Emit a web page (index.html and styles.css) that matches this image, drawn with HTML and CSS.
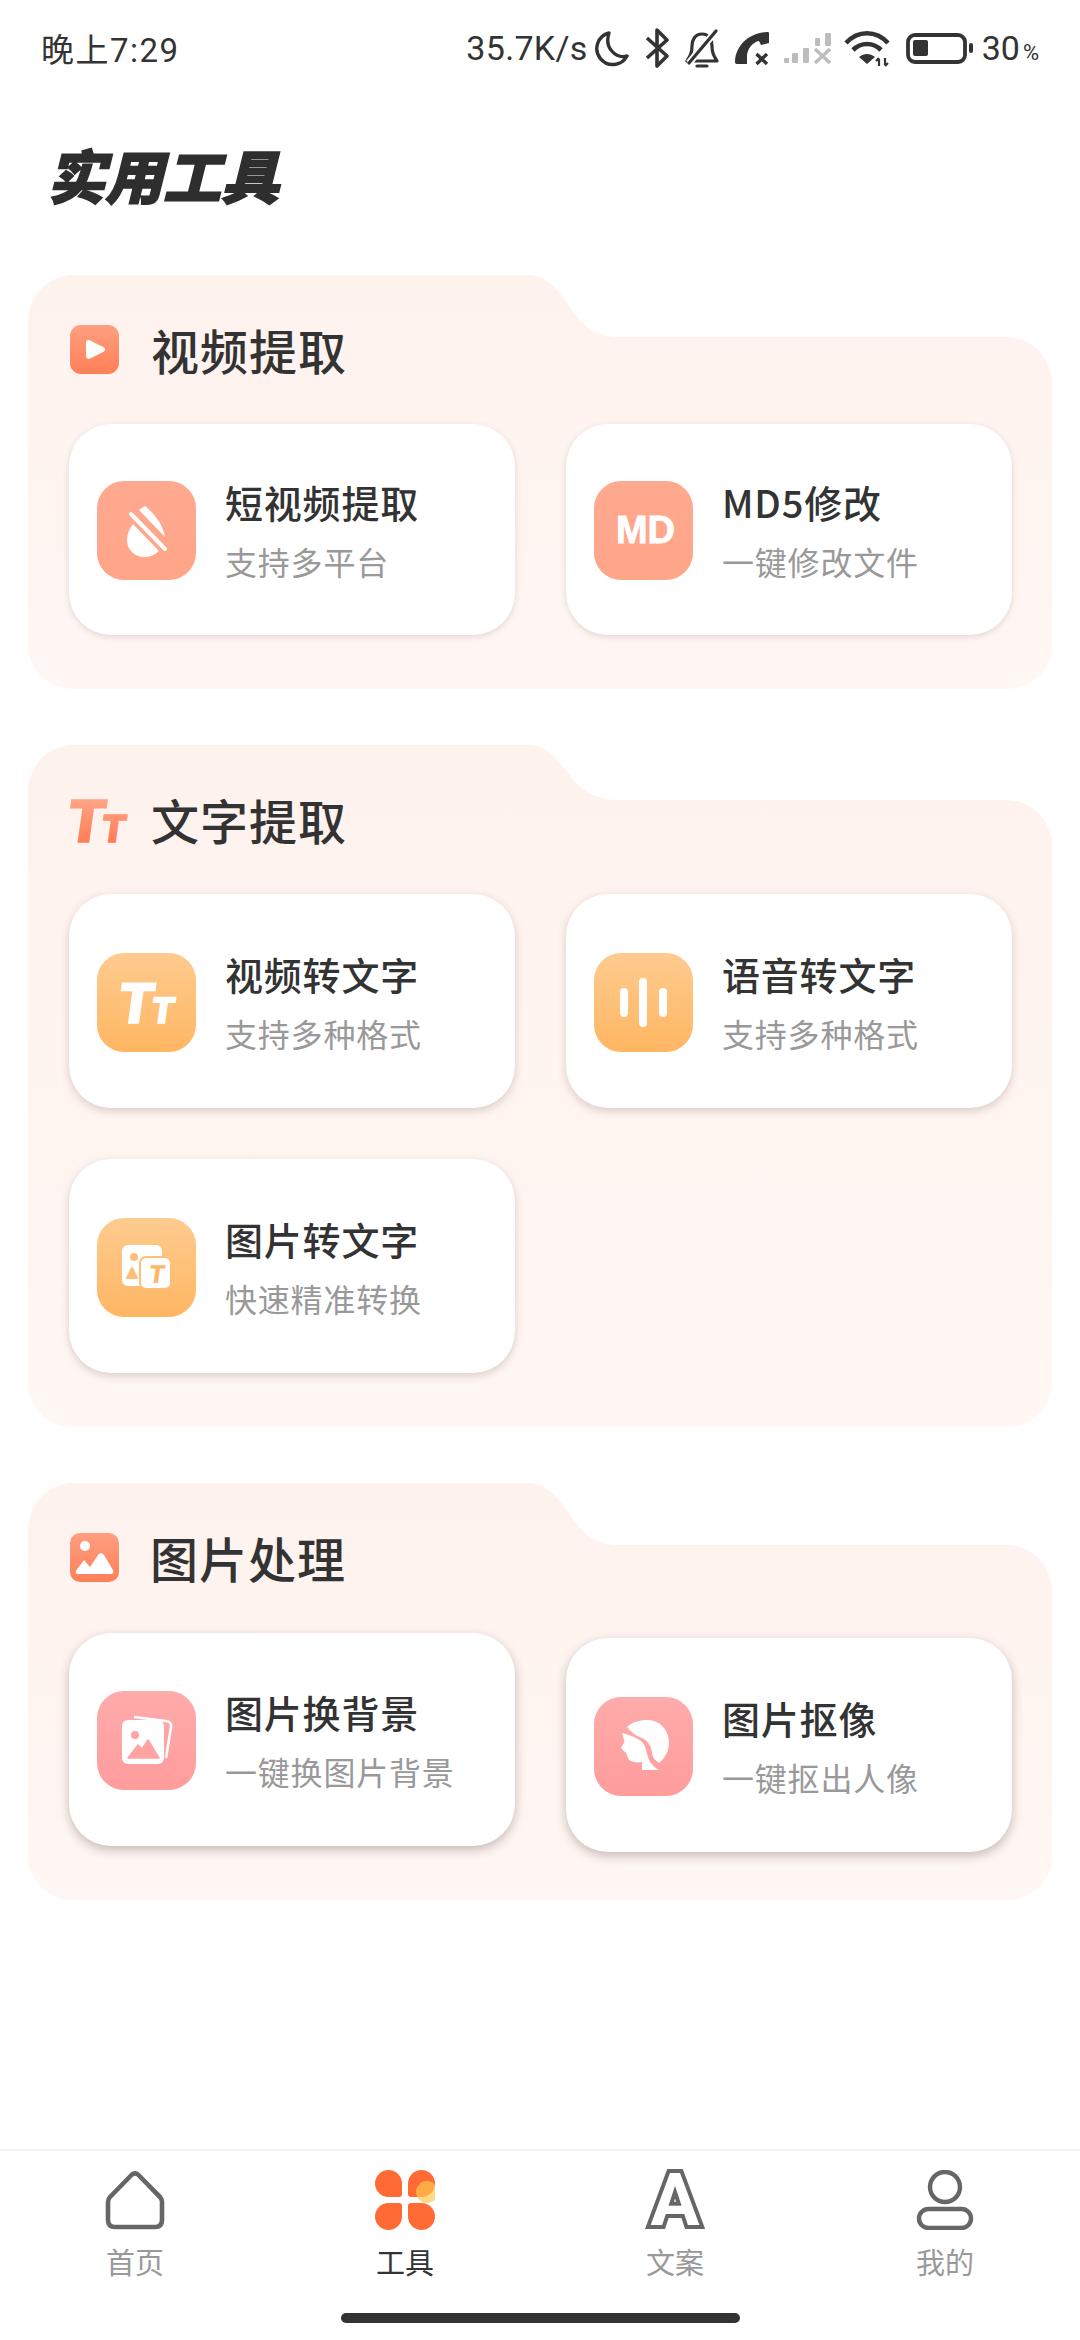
FILE: index.html
```html
<!DOCTYPE html>
<html>
<head>
	<meta charset="utf-8">
	<title>实用工具</title>
	<link rel="stylesheet" href="styles.css">
</head>

<body>
	<div class="status">
		<span class="status-time">晚上7:29</span>
		<div class="status-right">
			<span class="status-speed">35.7K/s</span>
			<svg class="st-moon" width="35" height="40" viewBox="0 0 35 40"><path d="M15 5A16 16 0 1 0 33 28C22 31 10 20 15 5Z" fill="none" stroke="#333" stroke-width="3.4" stroke-linejoin="round"/></svg>
			<svg class="st-bt" width="24" height="40" viewBox="0 0 24 40"><path d="M2 10L22 28L12 38V2L22 12L2 30" fill="none" stroke="#333" stroke-width="3.6" stroke-linejoin="round"/></svg>
			<svg class="st-bell" width="34" height="40" viewBox="0 0 34 40"><path d="M17 6C10 6 7 12 7 18C7 25 5 28 2 33H32C29 28 27 25 27 18C27 12 24 6 17 6Z" fill="none" stroke="#333" stroke-width="3.2" stroke-linejoin="round"/><path d="M12 38H22" stroke="#333" stroke-width="3.2" stroke-linecap="round"/><path d="M4 35L31 3" stroke="#fff" stroke-width="7"/><path d="M4 35L31 3" stroke="#333" stroke-width="3.2" stroke-linecap="round"/></svg>
			<svg class="st-phone" width="34" height="40" viewBox="0 0 34 40"><path d="M34 5V15L26 17L24 13C18 14 13 20 12 27V36H2C0 36 0 35 0 33C1 18 13 5 32 4C33 4 34 4 34 5Z" fill="#333"/><path d="M21.5 26L32 36M32 26L21.5 36" stroke="#333" stroke-width="3.4"/></svg>
			<svg class="st-signal" width="47" height="40" viewBox="0 0 47 40" fill="#bdbdbd"><rect x="0" y="30" width="5" height="5" rx="1"/><rect x="8" y="25" width="6" height="10" rx="1"/><rect x="19" y="20" width="6" height="15" rx="1"/><rect x="31" y="10" width="5" height="8" rx="1"/><rect x="41" y="5" width="6" height="13" rx="1"/><path d="M31 21L46 35M46 21L31 35" stroke="#bdbdbd" stroke-width="3.4"/></svg>
			<svg class="st-wifi" width="46" height="40" viewBox="0 0 46 40"><path d="M2 15C14 2 32 2 44 15M9 22C17 14 29 14 37 22" fill="none" stroke="#333" stroke-width="4.6"/><path d="M15 29C20 25 26 25 31 29L23 36Z" fill="#333"/><path d="M35 38V31M32 33L35 30M41 30V37M41 38L44 35" stroke="#333" stroke-width="2.2" fill="none"/></svg>
			<svg class="st-battery" width="67" height="40" viewBox="0 0 67 40"><rect x="2" y="7" width="57" height="27" rx="7" fill="none" stroke="#333" stroke-width="3.8"/><rect x="7" y="12" width="15" height="16" rx="2" fill="#333"/><rect x="63" y="15" width="4" height="10" rx="2" fill="#333"/></svg>
			<span class="status-batt">30<small>%</small></span>
		</div>
	</div>

	<h1 class="page-title">实用工具</h1>

	<div class="sheet sheet-video">
		<div class="sheet-head">
			<div class="head-icon">
				<svg width="50" height="49" viewBox="0 0 50 49"><defs><linearGradient id="hg1" x1="0" y1="0" x2="0" y2="1"><stop offset="0" stop-color="#ff9f80"/><stop offset="1" stop-color="#ff7f58"/></linearGradient></defs><rect x="1" width="49" height="49" rx="11" fill="url(#hg1)"/><path d="M19.5 17.5L33.500 24.500L19.5 31.500Z" fill="#fff" stroke="#fff" stroke-width="5" stroke-linejoin="round"/></svg>
			</div>
			<h2>视频提取</h2>
		</div>
		<div class="tool-grid">
			<div class="card card-short">
				<div class="tool-icon coral">
					<svg width="99" height="99" viewBox="0 0 99 99" fill="#fff"><path d="M48 25C58 33 66 44 68 56L42 29Z"/><path d="M34 33L68 68" stroke="#fff" stroke-width="4" stroke-linecap="round"/><path d="M36 43C32 48 30 54 30 59C30 69 38 76 47 76C53 76 58 74 62 70Z"/></svg>
				</div>
				<div class="tool-text">
					<div class="tool-name">短视频提取</div>
					<div class="tool-sub">支持多平台</div>
				</div>
			</div>
			<div class="card card-short">
				<div class="tool-icon coral"><span class="md-mark">MD</span></div>
				<div class="tool-text">
					<div class="tool-name">MD5修改</div>
					<div class="tool-sub">一键修改文件</div>
				</div>
			</div>
		</div>
	</div>

	<div class="sheet sheet-text">
		<div class="sheet-head">
			<div class="head-icon">
				<svg class="tt-head" width="74" height="79" viewBox="-10 -20 74 79"><defs><linearGradient id="hg2" gradientUnits="userSpaceOnUse" x1="0" y1="-42" x2="0" y2="0"><stop offset="0" stop-color="#ffa486"/><stop offset="1" stop-color="#ff7d55"/></linearGradient></defs><text class="tt-mark" transform="translate(0 47) skewX(-8)" font-size="59" fill="url(#hg2)" stroke="url(#hg2)">T</text><text class="tt-mark" transform="translate(35 47) skewX(-8)" font-size="38" fill="url(#hg2)" stroke="url(#hg2)">T</text></svg>
			</div>
			<h2>文字提取</h2>
		</div>
		<div class="tool-grid">
			<div class="card">
				<div class="tool-icon amber">
					<svg width="99" height="99" viewBox="0 0 99 99"><text class="tt-mark" transform="translate(19 70) skewX(-8)" font-size="56" fill="#fff" stroke="#fff">T</text><text class="tt-mark" transform="translate(53 70) skewX(-8)" font-size="36" fill="#fff" stroke="#fff">T</text></svg>
				</div>
				<div class="tool-text">
					<div class="tool-name">视频转文字</div>
					<div class="tool-sub">支持多种格式</div>
				</div>
			</div>
			<div class="card">
				<div class="tool-icon amber">
					<svg width="99" height="99" viewBox="0 0 99 99" fill="#fff"><rect x="26" y="35" width="8" height="29" rx="4"/><rect x="45" y="25" width="8" height="49" rx="4"/><rect x="65" y="35" width="8" height="29" rx="4"/></svg>
				</div>
				<div class="tool-text">
					<div class="tool-name">语音转文字</div>
					<div class="tool-sub">支持多种格式</div>
				</div>
			</div>
			<div class="card">
				<div class="tool-icon amber">
					<svg width="99" height="99" viewBox="0 0 99 99"><rect x="25" y="27" width="40" height="41" rx="6" fill="#fff"/><circle cx="37" cy="39" r="4" fill="#ffbe78"/><path d="M35 50L40 60H30Z" fill="#ffbe78" stroke="#ffbe78" stroke-width="2" stroke-linejoin="round"/><rect x="43" y="39" width="31" height="32" rx="6" fill="#fff" stroke="#ffbf78" stroke-width="2"/><text class="tt-mark" transform="translate(51 65) skewX(-8)" font-size="25" fill="#ffb766">T</text></svg>
				</div>
				<div class="tool-text">
					<div class="tool-name">图片转文字</div>
					<div class="tool-sub">快速精准转换</div>
				</div>
			</div>
		</div>
	</div>

	<div class="sheet sheet-photo">
		<div class="sheet-head">
			<div class="head-icon">
				<svg width="50" height="49" viewBox="0 0 50 49"><defs><linearGradient id="hg3" x1="0" y1="0" x2="0" y2="1"><stop offset="0" stop-color="#ff9f80"/><stop offset="1" stop-color="#ff7f58"/></linearGradient></defs><rect x="1" width="49" height="49" rx="10" fill="url(#hg3)"/><circle cx="16" cy="13" r="5" fill="#fff"/><path d="M9 41C7 41 6 39 7.500 37L15 27L21 34L29 22C31 19.500 33 19.500 35 22L44 37C45 39 44 41 42 41Z" fill="#fff"/></svg>
			</div>
			<h2>图片处理</h2>
		</div>
		<div class="tool-grid">
			<div class="card card-tight">
				<div class="tool-icon rose">
					<svg width="99" height="99" viewBox="0 0 99 99"><path d="M37 26L69 30Q75 31 74 36L69 67" fill="none" stroke="#fff" stroke-width="2.600"/><rect x="25" y="29" width="42" height="44" rx="6" fill="#fff"/><circle cx="38" cy="44" r="4" fill="#ffa3a3"/><path d="M31 67L41 54L45 58L51 49L62 67Z" fill="#ffa3a3" stroke="#ffa3a3" stroke-width="1.500" stroke-linejoin="round"/></svg>
				</div>
				<div class="tool-text">
					<div class="tool-name">图片换背景</div>
					<div class="tool-sub">一键换图片背景</div>
				</div>
			</div>
			<div class="card card-drop">
				<div class="tool-icon rose">
					<svg width="99" height="99" viewBox="0 0 99 99" fill="#fff"><path d="M33 30C38 25 46 23 53 23C66 23 75 33 75 46C75 54 71 61 65 66C61 63 58 60 58 56C58 50 54 44 48 41C42 39 37 35 33 30Z"/><path d="M28 36C36 38 44 41 48 45C52 49 52 54 54 60C55 65 60 70 65 73H48V65C43 66 38 65 35 63L32 56L27 51L30.500 45Z"/></svg>
				</div>
				<div class="tool-text">
					<div class="tool-name">图片抠像</div>
					<div class="tool-sub">一键抠出人像</div>
				</div>
			</div>
		</div>
	</div>

	<div class="tabbar">
		<div class="tabs">
			<div class="tab">
				<div class="tab-icon">
					<svg width="60" height="60" viewBox="0 0 60 60"><path d="M26.500 5L5 27Q3 29 3 32V50Q3 57 10 57H50Q57 57 57 50V32Q57 29 55 27L33.500 5Q30 1.500 26.500 5Z" fill="none" stroke="#666" stroke-width="4.600" stroke-linejoin="round"/></svg>
				</div>
				<div class="tab-label">首页</div>
			</div>
			<div class="tab tab-on">
				<div class="tab-icon">
					<svg width="60" height="60" viewBox="0 0 60 60"><g fill="#ff6a35"><path d="M13.500 0A13.500 13.500 0 0 1 27 13.500V24Q27 27 24 27H13.500A13.500 13.500 0 0 1 13.500 0Z"/><path d="M13.500 0A13.500 13.500 0 0 1 27 13.500V24Q27 27 24 27H13.500A13.500 13.500 0 0 1 13.500 0Z" transform="rotate(90 30 30)"/><path d="M13.500 0A13.500 13.500 0 0 1 27 13.500V24Q27 27 24 27H13.500A13.500 13.500 0 0 1 13.500 0Z" transform="rotate(180 30 30)"/><path d="M13.500 0A13.500 13.500 0 0 1 27 13.500V24Q27 27 24 27H13.500A13.500 13.500 0 0 1 13.500 0Z" transform="rotate(270 30 30)"/></g><circle cx="52" cy="22" r="11" fill="#ffc94f" fill-opacity="0.7"/></svg>
				</div>
				<div class="tab-label">工具</div>
			</div>
			<div class="tab">
				<div class="tab-icon"><span class="a-mark">A</span></div>
				<div class="tab-label">文案</div>
			</div>
			<div class="tab">
				<div class="tab-icon">
					<svg width="60" height="60" viewBox="0 0 60 60"><circle cx="30" cy="17" r="15" fill="none" stroke="#666" stroke-width="4.400"/><rect x="4" y="39" width="52" height="19" rx="9.500" fill="none" stroke="#666" stroke-width="4.400"/></svg>
				</div>
				<div class="tab-label">我的</div>
			</div>
		</div>
		<div class="home-bar"></div>
	</div>
</body>
</html>
```

FILE: styles.css
```css
* {
	box-sizing: border-box;
}

body {
	width: 1080px;
	height: 2340px;
	margin: 0;
	display: flex;
	flex-direction: column;
	background: #fff;
	color: #333;
	font-family: "Noto Sans CJK SC", sans-serif;
	overflow: hidden;
}

/* status bar */
.status {
	height: 96px;
	padding: 0 41px;
	display: flex;
	align-items: center;
	justify-content: space-between;
	font-family: Roboto, "Noto Sans CJK SC", sans-serif;
}

.status-time {
	font-size: 33px;
	letter-spacing: 1.5px;
}

.status-right {
	display: flex;
	align-items: center;
}

.status-speed {
	font-size: 34px;
	letter-spacing: 0.3px;
}

.st-moon { margin-left: 6px; }
.st-bt { margin-left: 16px; }
.st-bell { margin-left: 16px; }
.st-phone { margin-left: 16px; }
.st-signal { margin-left: 15px; }
.st-wifi { margin-left: 13px; }
.st-battery { margin-left: 16px; }

.status-batt {
	margin-left: 9px;
	font-size: 34px;
}

.status-batt small {
	margin-left: 3px;
	font-size: 22px;
}

.page-title {
	margin: 47px 0 70px 47px;
	height: 62px;
	font-size: 58px;
	line-height: 62px;
	font-weight: 900;
	font-style: italic;
	color: #2e2e2e;
	-webkit-text-stroke: 1.5px #2e2e2e;
}

/* section sheets */
.sheet {
	width: 1024px;
	margin: 0 28px 56px;
	padding: 50px 41px 54px;
	background: linear-gradient(#fef2ed, #fff7f4);
	border-radius: 0 0 44px 44px;
	clip-path: path("M0 2000V46A46 46 0 0 1 46 0H500C520 0 532 18 542 32C556 52 566 62 592 62H978A46 46 0 0 1 1024 108V2000Z");
}

.sheet-text {
	clip-path: path("M0 2000V46A46 46 0 0 1 46 0H500C520 0 530 16 540 28C554 46 566 55 592 55H978A46 46 0 0 1 1024 101V2000Z");
}

.sheet-photo {
	padding-bottom: 48px;
}

.sheet-head {
	height: 49px;
	display: flex;
	align-items: center;
}

.head-icon {
	width: 82px;
	height: 49px;
	flex-shrink: 0;
}

.head-icon svg {
	display: block;
}

.head-icon .tt-head {
	margin: -20px 0 0 -14px;
}

.sheet-head h2 {
	margin: 0;
	font-size: 48px;
	font-weight: 500;
	line-height: 49px;
	letter-spacing: 1px;
	color: #333;
}

.sheet-photo .sheet-head h2 {
	margin-left: -1px;
}

.tool-grid {
	margin-top: 50px;
	display: grid;
	grid-template-columns: 446px 446px;
	column-gap: 51px;
	row-gap: 51px;
	align-items: start;
}

.sheet-photo .tool-grid {
	margin-top: 51px;
}

.card {
	display: flex;
	gap: 29px;
	padding: 59px 28px 56px;
	background: #fff;
	border-radius: 42px;
	box-shadow: 0 3px 9px rgba(120, 85, 70, 0.26);
}

.card-short {
	padding: 57px 28px 55px;
	box-shadow: 0 2px 6px rgba(120, 85, 70, 0.2);
}

.card-tight {
	padding: 58px 28px 56px;
}

.card-drop {
	margin-top: 5px;
}

.sheet-photo .card {
	box-shadow: 0 4px 11px rgba(80, 60, 50, 0.32);
}

.tool-icon {
	width: 99px;
	height: 99px;
	flex-shrink: 0;
	display: flex;
	align-items: center;
	justify-content: center;
	border-radius: 27px;
}

.tool-icon svg {
	display: block;
}

.coral { background: linear-gradient(#ffa98f, #ffa588); }
.amber { background: linear-gradient(#fecb8f, #ffb662); }
.rose { background: linear-gradient(#ffabab, #ff9c9c); }

.md-mark {
	margin-left: 4px;
	font-family: "Liberation Sans", sans-serif;
	font-weight: 700;
	font-size: 38px;
	color: #fff;
	-webkit-text-stroke: 0.8px #fff;
}

.tt-mark {
	font-family: Roboto, sans-serif;
	font-weight: 900;
	stroke-width: 1.5px;
}

.tool-text {
	height: 99px;
	margin-top: -1px;
	white-space: nowrap;
}

.tool-name {
	font-size: 38px;
	line-height: 44px;
	font-weight: 500;
	letter-spacing: 0.8px;
	color: #333;
}

.tool-sub {
	margin-top: 17px;
	font-size: 32px;
	line-height: 40px;
	letter-spacing: 0.8px;
	color: #999;
}

/* bottom tabs */
.tabbar {
	margin-top: auto;
	padding-top: 19px;
	border-top: 2px solid #f3f3f3;
}

.tabs {
	display: flex;
}

.tab {
	width: 270px;
	display: flex;
	flex-direction: column;
	align-items: center;
}

.tab-icon {
	height: 60px;
}

.tab-icon svg {
	display: block;
}

.a-mark {
	display: block;
	font-family: Roboto, sans-serif;
	font-weight: 700;
	font-size: 73px;
	line-height: 60px;
	color: #fff;
	-webkit-text-stroke: 8px #666;
	paint-order: stroke fill;
}

.tab-label {
	margin-top: 14px;
	font-size: 29px;
	line-height: 34px;
	color: #999;
}

.tab-on .tab-label {
	color: #333;
}

.home-bar {
	width: 399px;
	height: 10px;
	margin: 35px auto 17px;
	border-radius: 5px;
	background: #333;
}
```
